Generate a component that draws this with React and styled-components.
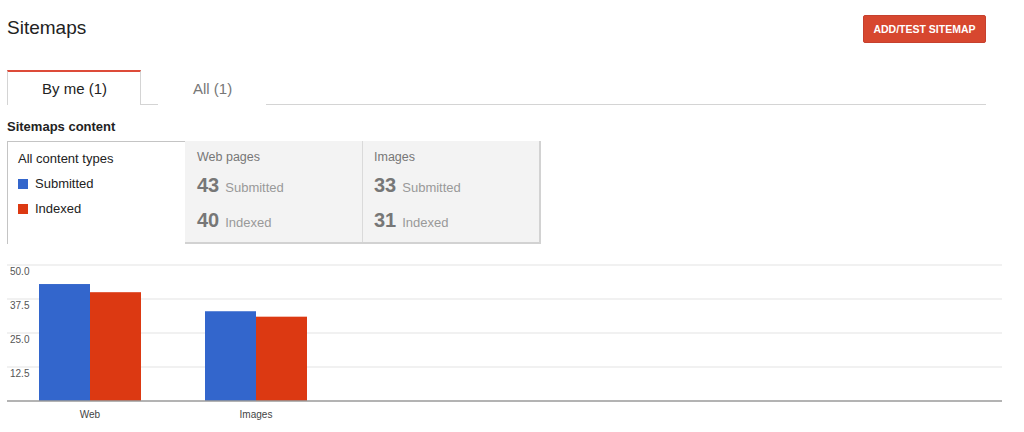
import React from "react";
import styled, { createGlobalStyle } from "styled-components";

const GlobalStyle = createGlobalStyle`
  body {
    margin: 0;
    background: #fff;
    font-family: "Liberation Sans", Arial, sans-serif;
    color: #222;
  }
`;

const Page = styled.div`
  width: 1024px;
  height: 432px;
  padding: 0 0 0 7px;
  box-sizing: border-box;
  overflow: hidden;
`;

const Header = styled.div`
  width: 979px;
  height: 56px;
  display: flex;
  justify-content: space-between;
  align-items: flex-start;
`;

const Title = styled.h1`
  margin: 16px 0 0;
  font-size: 19px;
  font-weight: normal;
  color: #222;
  line-height: 24px;
`;

const RedButton = styled.button`
  margin-top: 15px;
  width: 123px;
  height: 28px;
  border: 1px solid #c6402e;
  border-radius: 2px;
  background: #d7472f;
  color: #fff;
  font-family: "Liberation Sans", Arial, sans-serif;
  font-size: 10.5px;
  font-weight: bold;
  padding: 0;
`;

const TabBar = styled.div`
  margin-top: 14px;
  width: 979px;
  height: 34px;
  display: flex;
  gap: 17px;
  border-bottom: 1px solid #d4d4d4;
`;

const Tab = styled.div`
  box-sizing: border-box;
  height: 35px;
  padding: 0 33px 0 34px;
  display: flex;
  align-items: center;
  font-size: 15px;
  color: ${(p) => (p.$active ? "#222" : "#777")};
  background: #fff;
  border-top: 2px solid ${(p) => (p.$active ? "#dd4b39" : "transparent")};
  border-left: 1px solid ${(p) => (p.$active ? "#d4d4d4" : "transparent")};
  border-right: 1px solid ${(p) => (p.$active ? "#d4d4d4" : "transparent")};
`;

const SectionLabel = styled.div`
  margin-top: 14px;
  font-size: 13px;
  font-weight: bold;
  color: #222;
  line-height: 16px;
`;

const Stats = styled.div`
  margin-top: 6px;
  display: flex;
  height: 103px;
`;

const LegendPanel = styled.div`
  width: 178px;
  box-sizing: border-box;
  background: #fff;
  border-top: 1px solid #c4c4c4;
  border-left: 1px solid #c4c4c4;
  padding: 9px 0 0 10px;
  font-size: 13px;
  color: #222;
  line-height: 15px;
`;

const LegendRow = styled.div`
  display: flex;
  align-items: center;
  height: 15px;
  margin-top: ${(p) => p.$gap}px;
`;

const Swatch = styled.span`
  width: 10px;
  height: 10px;
  background: ${(p) => p.$color};
  margin-right: 7px;
`;

const StatPanels = styled.div`
  display: flex;
  background: #f3f3f3;
  border-right: 2px solid #d2d2d2;
  border-bottom: 2px solid #d2d2d2;
  height: 101px;
`;

const StatPanel = styled.div`
  width: 177px;
  box-sizing: border-box;
  padding: 9px 0 0 11px;
  border-left: 1px solid ${(p) => (p.$first ? "transparent" : "#dadada")};
`;

const PanelTitle = styled.div`
  font-size: 12.5px;
  color: #777;
  line-height: 15px;
`;

const StatRow = styled.div`
  display: flex;
  align-items: baseline;
  margin-top: ${(p) => p.$gap}px;
  color: #777;
`;

const Big = styled.span`
  font-size: 20px;
  font-weight: bold;
  margin-right: 6px;
  line-height: 22px;
`;

const Small = styled.span`
  font-size: 13px;
  color: #999;
`;

const Chart = styled.svg`
  display: block;
  margin-top: 14px;
`;

const BLUE = "#3366cc";
const RED = "#dc3912";

const groups = [
  { label: "Web", x: 32, submitted: 43, indexed: 40 },
  { label: "Images", x: 198, submitted: 33, indexed: 31 },
];

const base = 143;
const scale = 136 / 50;

const App = () => {
  return (
    <Page>
      <GlobalStyle />
      <Header>
        <Title>Sitemaps</Title>
        <RedButton>ADD/TEST SITEMAP</RedButton>
      </Header>
      <TabBar>
        <Tab $active>By me (1)</Tab>
        <Tab>All (1)</Tab>
      </TabBar>
      <SectionLabel>Sitemaps content</SectionLabel>
      <Stats>
        <LegendPanel>
          <div>All content types</div>
          <LegendRow $gap={10}>
            <Swatch $color={BLUE} />
            Submitted
          </LegendRow>
          <LegendRow $gap={10}>
            <Swatch $color={RED} />
            Indexed
          </LegendRow>
        </LegendPanel>
        <StatPanels>
          <StatPanel $first>
            <PanelTitle>Web pages</PanelTitle>
            <StatRow $gap={9}>
              <Big>43</Big>
              <Small>Submitted</Small>
            </StatRow>
            <StatRow $gap={13}>
              <Big>40</Big>
              <Small>Indexed</Small>
            </StatRow>
          </StatPanel>
          <StatPanel>
            <PanelTitle>Images</PanelTitle>
            <StatRow $gap={9}>
              <Big>33</Big>
              <Small>Submitted</Small>
            </StatRow>
            <StatRow $gap={13}>
              <Big>31</Big>
              <Small>Indexed</Small>
            </StatRow>
          </StatPanel>
        </StatPanels>
      </Stats>
      <Chart width="1000" height="170" viewBox="0 0 1000 170">
        {[50, 37.5, 25, 12.5].map((v) => {
          const y = base - v * scale;
          return (
            <g key={v}>
              <line x1="0" x2="995" y1={y} y2={y} stroke="#e3e3e3" strokeWidth="1" />
              <text
                x="3"
                y={y + 10}
                fontSize="10"
                fill="#555"
                fontFamily="Liberation Sans, Arial, sans-serif"
              >
                {v.toFixed(1)}
              </text>
            </g>
          );
        })}
        {groups.map((g) => (
          <g key={g.label}>
            <rect x={g.x} y={base - g.submitted * scale} width="51" height={g.submitted * scale} fill={BLUE} />
            <rect x={g.x + 51} y={base - g.indexed * scale} width="51" height={g.indexed * scale} fill={RED} />
            <text
              x={g.x + 51}
              y={base + 17}
              fontSize="10"
              fill="#444"
              textAnchor="middle"
              fontFamily="Liberation Sans, Arial, sans-serif"
            >
              {g.label}
            </text>
          </g>
        ))}
        <line x1="0" x2="995" y1={base} y2={base} stroke="#9a9a9a" strokeWidth="1.5" />
      </Chart>
    </Page>
  );
};

export default App;
